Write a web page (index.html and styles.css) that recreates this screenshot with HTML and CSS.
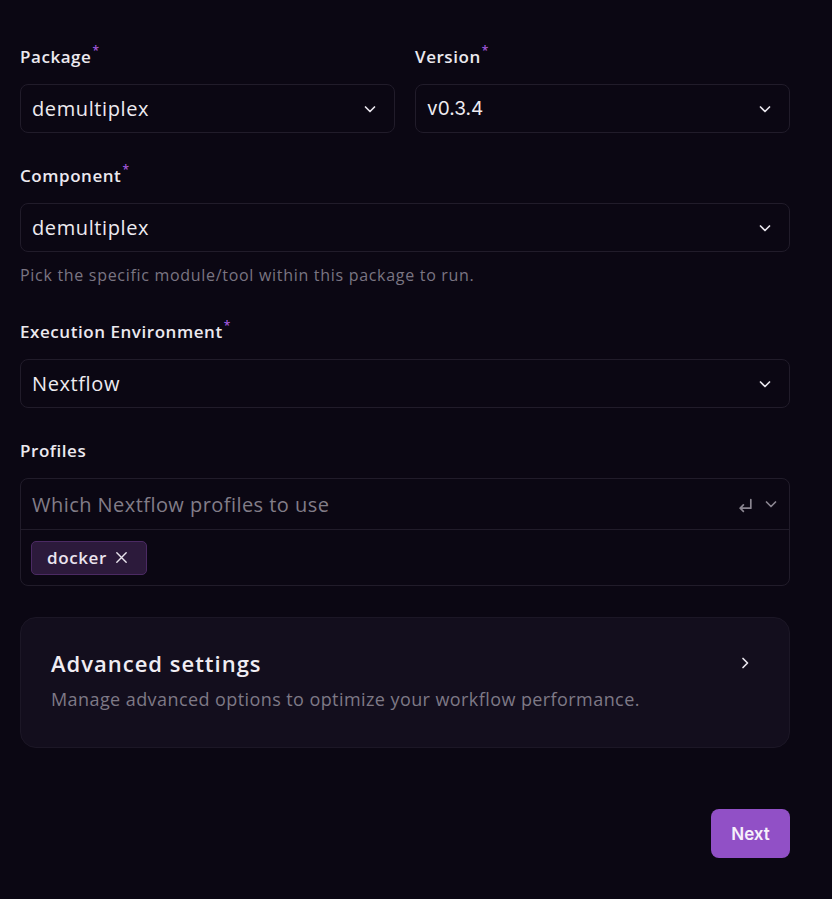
FILE: index.html
```html
<!DOCTYPE html>
<html>
<head>
<meta charset="utf-8">
<link rel="stylesheet" href="styles.css">
</head>
<body>
<main class="form">
  <div class="row">
    <div class="field">
      <label class="label">Package<span class="req">*</span></label>
      <div class="select"><span class="value">demultiplex</span>
        <svg class="chev" viewBox="0 0 16 16"><path d="M3.5 6l4.5 4.5L12.5 6"/></svg></div>
    </div>
    <div class="field">
      <label class="label">Version<span class="req">*</span></label>
      <div class="select"><span class="value alt">v0.3.4</span>
        <svg class="chev" viewBox="0 0 16 16"><path d="M3.5 6l4.5 4.5L12.5 6"/></svg></div>
    </div>
  </div>
  <div class="field">
    <label class="label">Component<span class="req">*</span></label>
    <div class="select"><span class="value">demultiplex</span>
      <svg class="chev" viewBox="0 0 16 16"><path d="M3.5 6l4.5 4.5L12.5 6"/></svg></div>
    <p class="help">Pick the specific module/tool within this package to run.</p>
  </div>
  <div class="field">
    <label class="label">Execution Environment<span class="req">*</span></label>
    <div class="select"><span class="value">Nextflow</span>
      <svg class="chev" viewBox="0 0 16 16"><path d="M3.5 6l4.5 4.5L12.5 6"/></svg></div>
  </div>
  <div class="field">
    <label class="label">Profiles</label>
    <div class="multi">
      <div class="multi-top">
        <span class="placeholder">Which Nextflow profiles to use</span>
        <svg class="enter" viewBox="0 0 16 16"><path d="M13 2.5v8H3M6 7.5l-3 3 3 3"/></svg>
        <svg class="chev dim" viewBox="0 0 16 16"><path d="M3.5 6l4.5 4.5L12.5 6"/></svg>
      </div>
      <div class="multi-bottom">
        <span class="chip">docker<svg class="x" viewBox="0 0 16 16"><path d="M3 3l10 10M13 3L3 13"/></svg></span>
      </div>
    </div>
  </div>
  <section class="card">
    <div class="card-head">
      <h2 class="card-title">Advanced settings</h2>
      <svg class="chev-r" viewBox="0 0 16 16"><path d="M6 3.5l4.5 4.5L6 12.5"/></svg>
    </div>
    <p class="card-desc">Manage advanced options to optimize your workflow performance.</p>
  </section>
  <div class="actions"><button class="next">Next</button></div>
</main>
</body>
</html>
```
FILE: styles.css
```css
html, body { margin: 0; padding: 0; background: #0b0713; }
body { font-family: "Open Sans", sans-serif; color: #ebe8ee; }
.form { width: 770px; padding: 45px 0 0 20px; display: flex; flex-direction: column; }
.row { display: grid; grid-template-columns: 375px 375px; column-gap: 20px; }
.field { display: flex; flex-direction: column; margin-bottom: 31px; }
.label { font-size: 17px; font-weight: 600; letter-spacing: 0.55px; line-height: 24px; margin-bottom: 15px; color: #ece9ef; }
.req { color: #a259db; font-size: 12px; vertical-align: top; position: relative; top: -6px; margin-left: 1px; }
.select { height: 49px; box-sizing: border-box; border: 1px solid #211c2a; border-radius: 8px; display: flex; align-items: center; justify-content: space-between; padding: 0 16px 0 11px; background: #0b0713; }
.value { font-size: 20px; letter-spacing: 0.6px; color: #eeebf0; }
.value.alt { font-family: "Inter", sans-serif; font-size: 19px; letter-spacing: 0; }
.chev { width: 16px; height: 16px; fill: none; stroke: #e8e5ec; stroke-width: 1.7; stroke-linecap: round; stroke-linejoin: round; }
.chev.dim { stroke: #8a8590; margin-left: 9px; }
.help { margin: 12px 0 0; font-size: 16px; line-height: 22px; color: #7a7582; letter-spacing: 0.7px; }
.field:has(.help) { margin-bottom: 34px; }
.multi { border: 1px solid #211c2a; border-radius: 8px; }
.multi-top { height: 50px; display: flex; align-items: center; padding: 0 10px 0 11px; border-bottom: 1px solid #211c2a; }
.placeholder { flex: 1; font-size: 20px; color: #827d88; letter-spacing: 0.45px; }
.enter { width: 17px; height: 17px; margin-top: 3px; fill: none; stroke: #8a8590; stroke-width: 1.6; stroke-linecap: round; stroke-linejoin: round; }
.multi-bottom { height: 55px; display: flex; align-items: center; padding: 0 10px; }
.chip { display: inline-flex; align-items: center; gap: 7px; height: 34px; box-sizing: border-box; padding: 0 17px 0 15px; background: #2c1a3b; border: 1px solid #4b2a63; border-radius: 5px; font-size: 17px; font-weight: 600; letter-spacing: 0.6px; color: #ebe5ef; }
.x { width: 15px; height: 15px; fill: none; stroke: #e8e3ec; stroke-width: 1.5; stroke-linecap: round; }
.card { margin-top: 0; height: 131px; box-sizing: border-box; background: #130e1d; border: 1px solid #1c1726; border-radius: 16px; padding: 30px 30px 0 30px; }
.card-head { display: flex; justify-content: space-between; align-items: center; }
.card-title { margin: 0; font-size: 22px; font-weight: 600; color: #f0edf3; letter-spacing: 1px; line-height: 30px; }
.chev-r { width: 16px; height: 16px; fill: none; stroke: #e8e5ec; stroke-width: 1.7; stroke-linecap: round; stroke-linejoin: round; margin-right: 6px; }
.card-desc { margin: 9px 0 0; font-size: 18px; color: #7e7986; letter-spacing: 0.42px; }
.actions { display: flex; justify-content: flex-end; margin-top: 61px; }
.next { width: 79px; height: 49px; border: 0; border-radius: 8px; background: #9150c6; color: #f6f0fb; font-family: "Inter", sans-serif; font-size: 17px; font-weight: 600; }
```
